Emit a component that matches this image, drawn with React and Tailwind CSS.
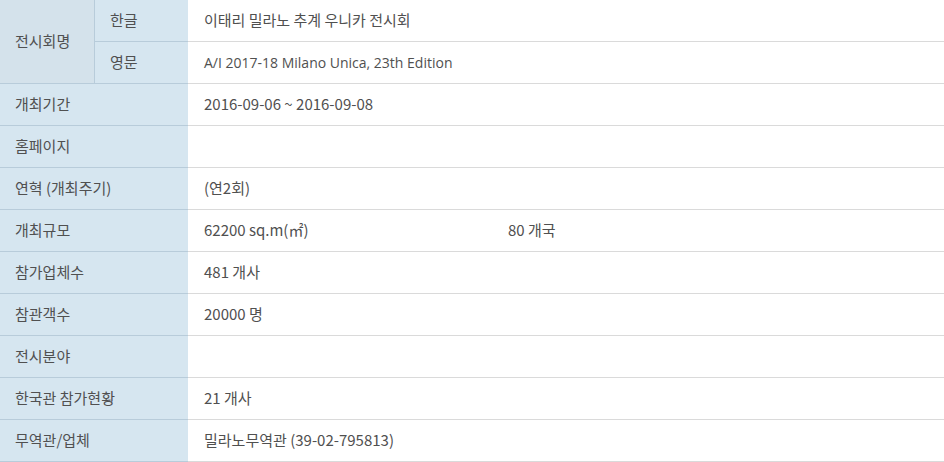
import React from "react";

const rows = [
  { label: "개최기간", value: "2016-09-06 ~ 2016-09-08" },
  { label: "홈페이지", value: "" },
  { label: "연혁 (개최주기)", value: "(연2회)" },
  { label: "개최규모", value: "62200 sq.m(㎡)", extra: "80 개국" },
  { label: "참가업체수", value: "481 개사" },
  { label: "참관객수", value: "20000 명" },
  { label: "전시분야", value: "" },
  { label: "한국관 참가현황", value: "21 개사" },
  { label: "무역관/업체", value: "밀라노무역관 (39-02-795813)" },
];

const font = {
  fontFamily: '"Noto Sans CJK KR", "Noto Sans", sans-serif',
};

function ValueCell({ value, extra, latin }) {
  return (
    <div className="flex flex-1 items-center border-b border-[#dadada] bg-white pl-[16px]">
      <span
        className={latin ? "w-[304px] text-[14px] font-['Open_Sans',sans-serif]" : "w-[304px]"}
      >
        {value}
      </span>
      {extra ? <span>{extra}</span> : null}
    </div>
  );
}

export default function App() {
  return (
    <div
      className="w-[944px] h-[462px] overflow-hidden bg-white text-[15px] text-[#505050]"
      style={font}
    >
      <div className="flex h-[84px]">
        <div className="flex w-[95px] items-center border-b border-r border-[#b8ccda] bg-[#d4e2eb] pl-[15px]">
          전시회명
        </div>
        <div className="flex flex-1 flex-col">
          <div className="flex h-[42px]">
            <div className="flex w-[93px] items-center border-b border-[#b8ccda] bg-[#d6e6f0] pl-[15px]">
              한글
            </div>
            <ValueCell value="이태리 밀라노 추계 우니카 전시회" />
          </div>
          <div className="flex h-[42px]">
            <div className="flex w-[93px] items-center border-b border-[#b8ccda] bg-[#d6e6f0] pl-[15px]">
              영문
            </div>
            <ValueCell value="A/I 2017-18 Milano Unica, 23th Edition" latin />
          </div>
        </div>
      </div>
      {rows.map((row) => (
        <div className="flex h-[42px]" key={row.label}>
          <div className="flex w-[188px] items-center border-b border-[#b8ccda] bg-[#d6e6f0] pl-[15px]">
            {row.label}
          </div>
          <ValueCell value={row.value} extra={row.extra} />
        </div>
      ))}
    </div>
  );
}
